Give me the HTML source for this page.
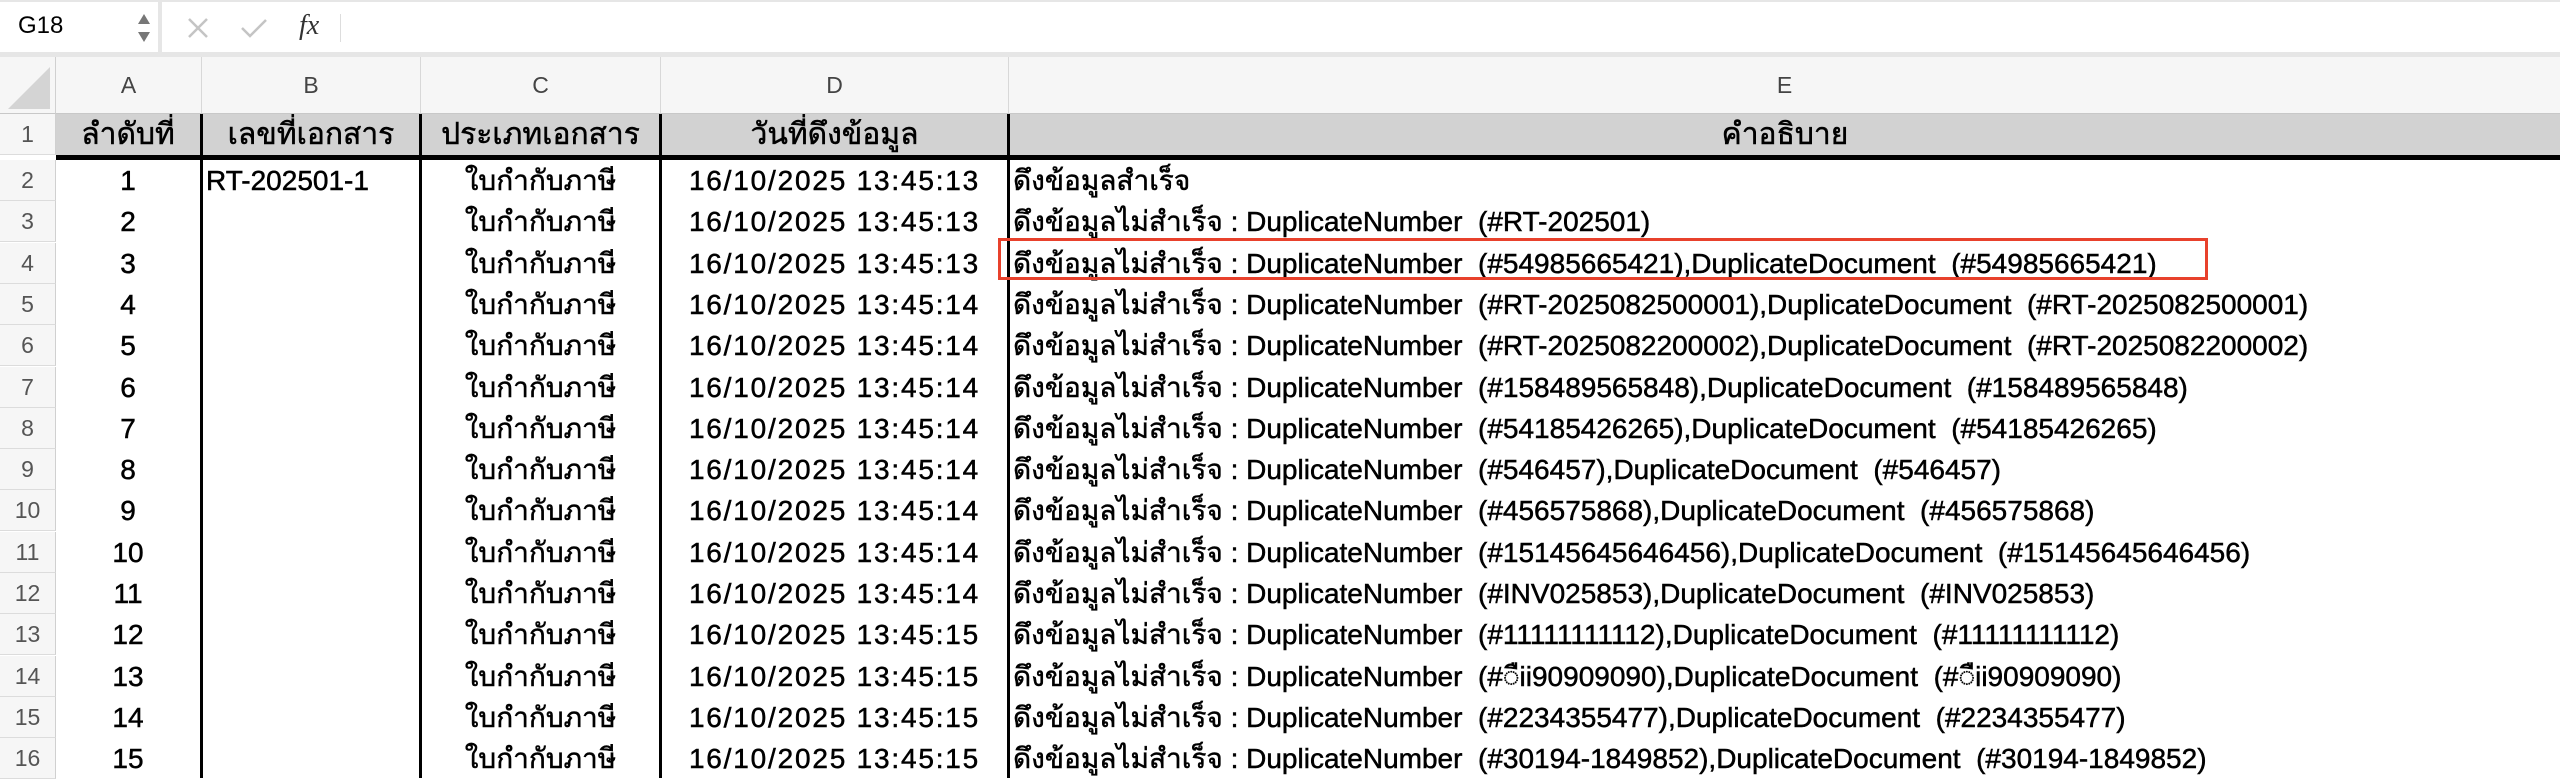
<!DOCTYPE html>
<html><head><meta charset="utf-8"><style>
*{margin:0;padding:0;box-sizing:border-box}
body{width:2560px;height:778px;overflow:hidden;background:#fff;position:relative;font-family:"Liberation Sans",sans-serif;}
.a{position:absolute}
.fb{left:0;top:0;width:2560px;height:57px;background:#e6e6e6}
.nb{left:0;top:2px;width:158px;height:50px;background:#fff}
.fx{left:162px;top:2px;width:2398px;height:50px;background:#fff}
.ch{top:57px;height:57px;background:#f6f6f6;border-right:1px solid #d8d8d8;border-bottom:1px solid #c8c8c8;color:#444;font-size:23px;text-align:center;line-height:57px}
.rh{left:0;width:56px;background:#f6f6f6;border-right:1px solid #d0d0d0;border-bottom:1px solid #dcdcdc;color:#555;font-size:23px;text-align:center}
.c{font-size:28px;white-space:nowrap;color:#000;overflow:hidden;-webkit-text-stroke:0.5px #000}
.vl{width:3px;background:#000;top:114px;height:664px}
</style></head><body>
<div class="a fb"></div>
<div class="a nb"><span class="a" style="left:18px;top:10px;font-size:24px">G18</span>
<svg class="a" style="left:136px;top:10px" width="16" height="32"><path d="M8 2L14 12H2Z M8 30L14 20H2Z" fill="#777"/></svg></div>
<div class="a fx">
<svg class="a" style="left:24px;top:14px" width="24" height="24"><path d="M3 3L21 21M21 3L3 21" stroke="#c4c4c4" stroke-width="2.5"/></svg>
<svg class="a" style="left:78px;top:14px" width="28" height="24"><path d="M2 12L10 20L26 4" stroke="#c4c4c4" stroke-width="2.5" fill="none"/></svg>
<span class="a" style="left:137px;top:8px;font-family:'Liberation Serif',serif;font-style:italic;font-size:28px;color:#333">fx</span>
<div class="a" style="left:178px;top:12px;width:1px;height:28px;background:#ddd"></div>
</div>
<div class="a" style="left:0;top:57px;width:56px;height:57px;background:#f6f6f6;border-right:1px solid #d0d0d0;border-bottom:1px solid #c8c8c8"><svg width="56" height="57"><path d="M8 52L50 52L50 10Z" fill="#d4d4d4"/></svg></div>
<div class="a ch" style="left:56px;width:146px">A</div>
<div class="a ch" style="left:202px;width:219px">B</div>
<div class="a ch" style="left:421px;width:240px">C</div>
<div class="a ch" style="left:661px;width:348px">D</div>
<div class="a ch" style="left:1009px;width:1551px;border-right:0">E</div>
<div class="a" style="left:56px;top:114px;width:2504px;height:41px;background:#d2d2d2"></div>
<div class="a" style="left:56px;top:155px;width:2504px;height:5px;background:#000"></div>
<div id="g"></div>
<div class="a vl" style="left:200px"></div>
<div class="a vl" style="left:419px"></div>
<div class="a vl" style="left:659px"></div>
<div class="a vl" style="left:1007px"></div>
<div class="a" style="left:998px;top:238px;width:1210px;height:42px;border:3px solid #e8412c"></div>
<script>
var h='';
function rh(n,t,ht){h+='<div class="a rh" style="top:'+t+'px;height:'+ht+'px;line-height:'+ht+'px">'+n+'</div>';}
function cell(l,w,t,ht,txt,al,ex){h+='<div class="a c" style="left:'+l+'px;width:'+w+'px;top:'+t+'px;height:'+ht+'px;line-height:'+ht+'px;text-align:'+al+';'+(ex||'')+'">'+txt+'</div>';}
rh(1,114,41);
var hs='font-size:30px;';
cell(56,144,114,41,'ลำดับที่','center',hs);
cell(203,216,114,41,'เลขที่เอกสาร','center',hs);
cell(422,237,114,41,'ประเภทเอกสาร','center',hs);
cell(662,345,114,41,'วันที่ดึงข้อมูล','center',hs);
cell(1010,1550,114,41,'คำอธิบาย','center',hs);
var ids=['','RT-202501','54985665421','RT-2025082500001','RT-2025082200002','158489565848','54185426265','546457','456575868','15145645646456','INV025853','11111111112','◌ืii90909090','2234355477','30194-1849852'];
for(var i=0;i<15;i++){
 var t=Math.round(160+i*41.3),ht=41;
 rh(i+2,t,ht);
 cell(56,144,t,ht,String(i+1),'center');
 if(i==0)cell(206,212,t,ht,'RT-202501-1','left');
 cell(422,237,t,ht,'ใบกำกับภาษี','center');
 var s=i<3?'13':(i<11?'14':'15');
 cell(662,345,t,ht,'16/10/2025 13:45:'+s,'center','letter-spacing:1.8px');
 var e;
 if(i==0)e='ดึงข้อมูลสำเร็จ';
 else if(i==1)e='ดึงข้อมูลไม่สำเร็จ : DuplicateNumber &nbsp;(#RT-202501)';
 else e='ดึงข้อมูลไม่สำเร็จ : DuplicateNumber &nbsp;(#'+ids[i]+'),DuplicateDocument &nbsp;(#'+ids[i]+')';
 cell(1013,1540,t,ht,e,'left');
}
document.getElementById('g').innerHTML=h;
</script>
</body></html>
